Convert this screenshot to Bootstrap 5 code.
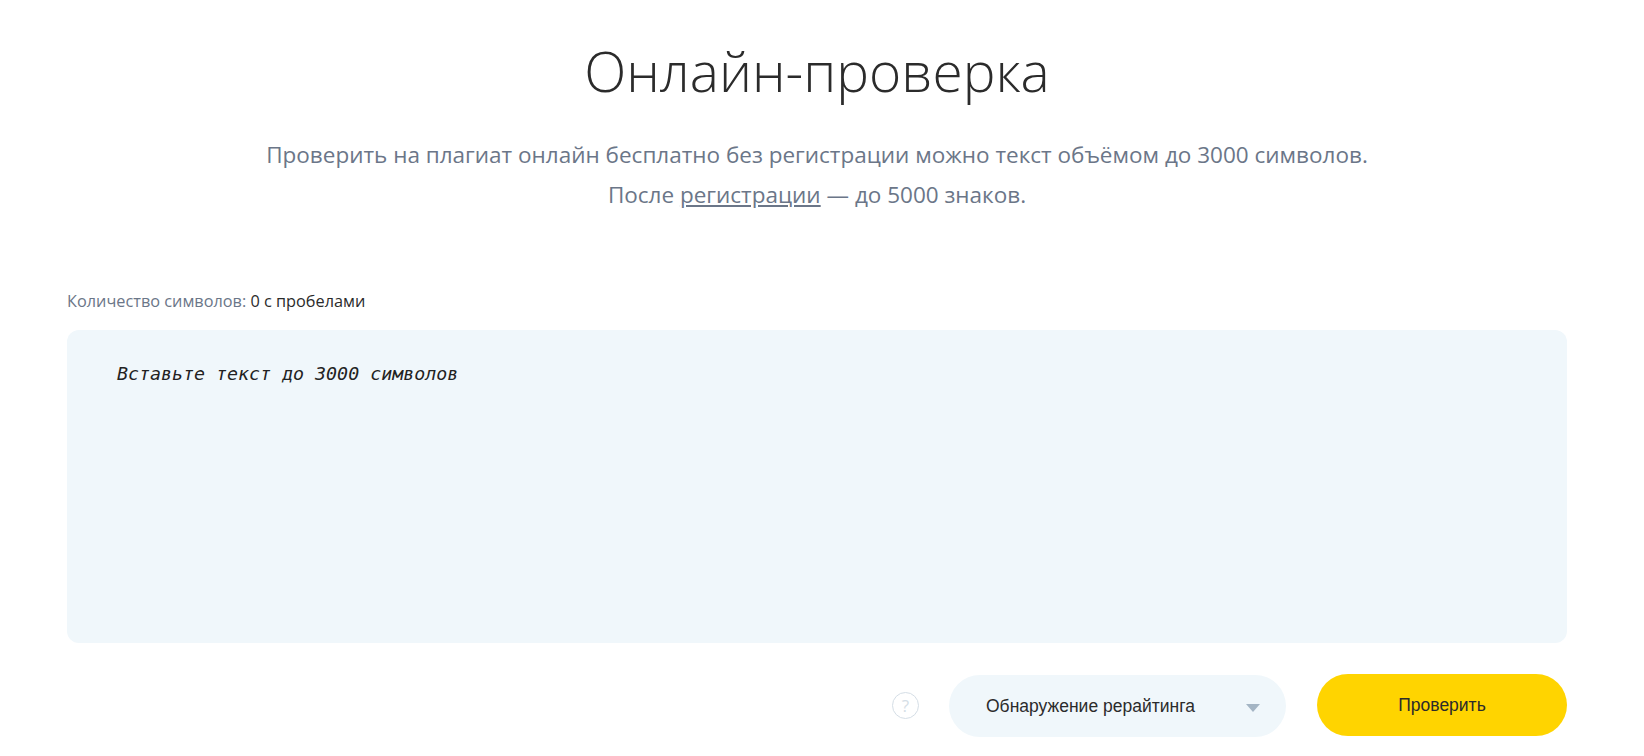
<!DOCTYPE html>
<html lang="ru">
<head>
<meta charset="utf-8">
<title>Онлайн-проверка</title>
<link href="https://cdn.jsdelivr.net/npm/bootstrap@5.3.0/dist/css/bootstrap.min.css" rel="stylesheet">
<style>
body { font-family: "Open Sans", sans-serif; color: #2b2b2b; background: #fff; overflow: hidden; }
.page-wrap { width: 1500px; margin-left: 67px; }
.page-title { font-family: "Open Sans", sans-serif; font-weight: 300; font-size: 55px; line-height: 82px; margin: 30px 0 0; color: #2b2b2b; }
.page-sub { font-size: 22.5px; line-height: 40px; color: #6b7688; margin: 23px 0 0; }
.page-sub a { color: #6b7688; }
.char-count { font-size: 16.3px; line-height: 20px; color: #6b7688; margin-top: 76px; }
.char-count span { color: #2b2b2b; }
.text-box { display: block; width: 100%; height: 313px; margin-top: 19px; padding: 32px 50px; background: #f0f7fb; border: 0; border-radius: 12px; resize: none; outline: 0; font-family: "DejaVu Sans Mono", monospace; font-style: italic; font-size: 18.3px; line-height: 24px; }
.text-box::placeholder { color: #222; opacity: 1; }
.tool-row { margin-top: 31px; }
.help-mark { width: 27px; height: 27px; border: 1px solid #d5dee6; color: #d5dee6; font-size: 17px; line-height: 1; }
.mode-pick { width: 337px; height: 62px; margin-left: 30px; margin-top: 1px; padding: 0 26px 0 37px; background: #f0f7fb; border-radius: 31px; font-family: "Liberation Sans", sans-serif; font-size: 17.5px; color: #2b2b2b; }
.mode-arrow { width: 0; height: 0; border-left: 7px solid transparent; border-right: 7px solid transparent; border-top: 8px solid #a4b5c4; margin-top: 3px; }
.go-btn { width: 250px; height: 62px; margin-left: 31px; margin-bottom: 1px; background: #ffd400; border: 0; border-radius: 31px; font-family: "Liberation Sans", sans-serif; font-size: 17.5px; color: #2b2b2b; }
.go-btn:hover { background: #ffd400; color: #2b2b2b; }
</style>
</head>
<body>
<main class="page-wrap">
  <h1 class="page-title text-center">Онлайн-проверка</h1>
  <p class="page-sub text-center">Проверить на плагиат онлайн бесплатно без регистрации можно текст объёмом до 3000 символов.<br>После <a href="#">регистрации</a> — до 5000 знаков.</p>
  <div class="char-count">Количество символов: <span>0 с пробелами</span></div>
  <textarea class="text-box" placeholder="Вставьте текст до 3000 символов"></textarea>
  <div class="tool-row d-flex justify-content-end align-items-center">
    <div class="help-mark rounded-circle d-flex align-items-center justify-content-center">?</div>
    <div class="mode-pick d-flex align-items-center justify-content-between"><span>Обнаружение рерайтинга</span><i class="mode-arrow"></i></div>
    <button type="button" class="btn go-btn">Проверить</button>
  </div>
</main>
<script src="https://cdn.jsdelivr.net/npm/bootstrap@5.3.0/dist/js/bootstrap.bundle.min.js"></script>
</body>
</html>
